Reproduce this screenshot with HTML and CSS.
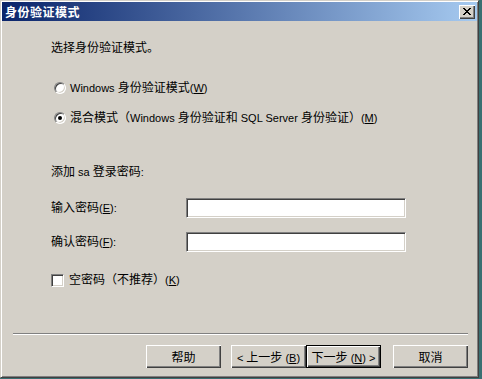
FILE: index.html
```html
<!DOCTYPE html>
<html lang="zh-CN">
<head>
<meta charset="utf-8">
<title>身份验证模式</title>
<link rel="stylesheet" href="styles.css">
</head>
<body>
<div class="window">
  <div class="titlebar">
    <span class="title">身份验证模式</span>
    <span class="close">
      <svg width="8" height="7" viewBox="0 0 8 7" shape-rendering="crispEdges">
        <path d="M0 0h2v1h-2zM6 0h2v1h-2zM1 1h2v1h-2zM5 1h2v1h-2zM2 2h4v1h-4zM3 3h2v1h-2zM2 4h4v1h-4zM1 5h2v1h-2zM5 5h2v1h-2zM0 6h2v1h-2zM6 6h2v1h-2z" fill="#000"/>
      </svg>
    </span>
  </div>
  <div class="content">
    <div class="row heading"><span>选择身份验证模式。</span></div>
    <div class="row radio-row r1"><span class="radio"></span><span><span class="lat">Windows </span>身份验证模式<span class="lat">(<u>W</u>)</span></span></div>
    <div class="row radio-row r2"><span class="radio checked"></span><span>混合模式（<span class="lat">Windows </span>身份验证和<span class="lat"> SQL Server </span>身份验证）<span class="lat">(<u>M</u>)</span></span></div>
    <div class="row sa"><span>添加<span class="lat"> sa </span>登录密码<span class="lat">:</span></span></div>
    <div class="field f1"><label class="flabel">输入密码<span class="lat">(<u>E</u>):</span></label><span class="input"></span></div>
    <div class="field f2"><label class="flabel">确认密码<span class="lat">(<u>F</u>):</span></label><span class="input"></span></div>
    <div class="row check-row"><span class="checkbox"></span><span>空密码（不推荐）<span class="lat">(<u>K</u>)</span></span></div>
  </div>
  <div class="footer">
    <div class="separator"></div>
    <div class="buttons">
      <span class="btn help">帮助</span>
      <span class="btn back"><span><span class="lat">&lt;&nbsp;</span>上一步<span class="lat">&nbsp;(<u>B</u>)</span></span></span>
      <span class="btn default"><span>下一步<span class="lat">&nbsp;(<u>N</u>)&nbsp;&gt;</span></span></span>
      <span class="btn cancel">取消</span>
    </div>
  </div>
</div>
</body>
</html>
```

FILE: styles.css
```css
html, body {
  margin: 0;
  padding: 0;
}
body {
  width: 482px;
  height: 379px;
  background: #3a6f72;
  font-family: "Liberation Sans", "Noto Sans CJK SC", sans-serif;
  font-size: 12px;
  color: #000;
  overflow: hidden;
}
.lat {
  font-family: "Liberation Sans", sans-serif;
  font-size: 11px;
}
.window {
  width: 479px;
  height: 378px;
  box-sizing: border-box;
  background: #d4d0c8;
  border: 1px solid;
  border-color: #d4d0c8 #404040 #404040 #d4d0c8;
  box-shadow: inset 1px 1px 0 #fff, inset -1px -1px 0 #808080;
  padding: 1px;
  display: flex;
  flex-direction: column;
}
.titlebar {
  height: 19px;
  background: linear-gradient(to right, #0a246a, #a6caf0);
  display: flex;
  align-items: center;
  justify-content: space-between;
  padding: 0 2px 0 3px;
}
.title {
  color: #fff;
  font-weight: bold;
  font-family: "Noto Sans CJK SC", sans-serif;
  font-size: 12px;
  line-height: 14px;
  letter-spacing: 0.5px;
}
.close {
  width: 16px;
  height: 14px;
  box-sizing: border-box;
  background: #d4d0c8;
  box-shadow: inset 1px 1px 0 #fff, inset -1px -1px 0 #404040, inset -2px -2px 0 #808080;
  display: flex;
  align-items: center;
  justify-content: center;
  padding: 0 1px 1px 0;
}
.close svg { display: block; }
.content {
  padding-left: 49px;
  display: flex;
  flex-direction: column;
}
.row {
  height: 14px;
  line-height: 14px;
  display: flex;
  align-items: center;
  white-space: nowrap;
}
.heading { margin-top: 20px; }
.r1 { margin-top: 26px; }
.r2 { margin-top: 16px; }
.radio-row { padding-left: 3px; }
.radio {
  width: 12px;
  height: 12px;
  border-radius: 50%;
  background: #fff;
  box-sizing: border-box;
  border: 1px solid;
  border-color: #808080 #fff #fff #808080;
  box-shadow: inset 1px 1px 0 #404040, inset -1px -1px 0 #d4d0c8;
  margin-right: 4px;
  display: flex;
  align-items: center;
  justify-content: center;
  flex: none;
}
.radio.checked::after {
  content: "";
  width: 4px;
  height: 4px;
  border-radius: 50%;
  background: #000;
}
.sa { margin-top: 40px; }
.field {
  display: flex;
  align-items: center;
  height: 20px;
  white-space: nowrap;
}
.f1 { margin-top: 19px; }
.f2 { margin-top: 14px; }
.flabel {
  width: 135px;
  line-height: 14px;
}
.input {
  width: 220px;
  height: 20px;
  box-sizing: border-box;
  background: #fff;
  border: 1px solid;
  border-color: #808080 #fff #fff #808080;
  box-shadow: inset 1px 1px 0 #404040, inset -1px -1px 0 #d4d0c8;
}
.check-row { margin-top: 21px; }
.checkbox {
  width: 13px;
  height: 13px;
  box-sizing: border-box;
  background: #fff;
  border: 1px solid;
  border-color: #808080 #fff #fff #808080;
  box-shadow: inset 1px 1px 0 #404040, inset -1px -1px 0 #d4d0c8;
  margin-right: 5px;
  flex: none;
}
.footer {
  margin-top: auto;
  padding-bottom: 8px;
}
.separator {
  margin: 0 9px 0 11px;
  border-top: 1px solid #808080;
  border-bottom: 1px solid #fff;
  height: 0;
}
.buttons {
  margin-top: 10px;
  display: flex;
  justify-content: flex-end;
  padding-right: 9px;
}
.btn {
  width: 75px;
  height: 23px;
  box-sizing: border-box;
  display: flex;
  align-items: center;
  justify-content: center;
  background: #d4d0c8;
  box-shadow: inset 1px 1px 0 #fff, inset -1px -1px 0 #404040, inset -2px -2px 0 #808080;
  white-space: nowrap;
  font-size: 12px;
}
.help { margin-right: 10px; }
.cancel { margin-left: 12px; }
.default {
  border: 1px solid #000;
}
u { text-decoration: underline; text-underline-offset: 1px; }
```
